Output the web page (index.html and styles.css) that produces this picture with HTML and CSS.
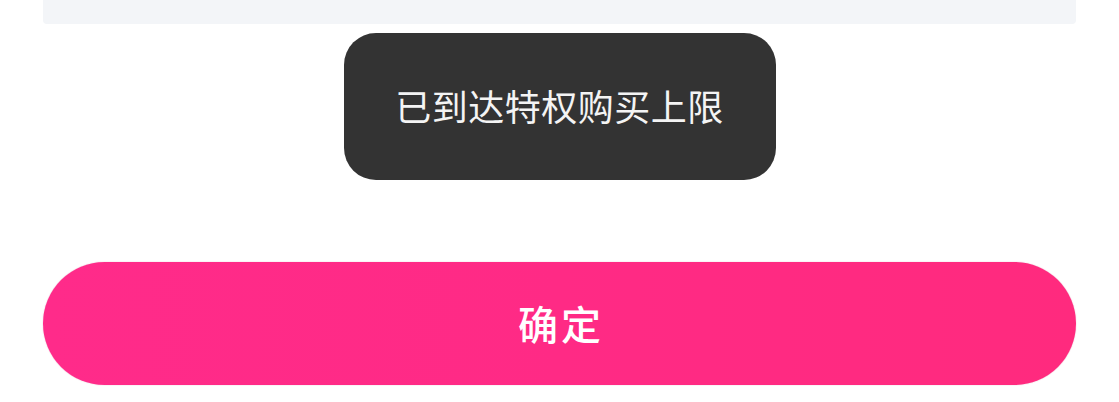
FILE: index.html
```html
<!DOCTYPE html>
<html lang="zh-CN">
<head>
<meta charset="utf-8">
<link rel="stylesheet" href="styles.css">
</head>
<body>
<div class="page">
  <div class="top-panel"></div>
  <div class="toast-row">
    <div class="toast">已到达特权购买上限</div>
  </div>
  <button class="confirm">确定</button>
</div>
</body>
</html>
```
FILE: styles.css
```css
html, body {
  margin: 0;
  padding: 0;
  background: #ffffff;
}
body {
  font-family: "Noto Sans CJK SC", "Noto Sans", sans-serif;
  width: 1119px;
  height: 402px;
  overflow: hidden;
}
.page {
  padding: 0 43px;
  display: flex;
  flex-direction: column;
}
.top-panel {
  height: 24px;
  background: #f3f5f8;
  border-radius: 0 0 4px 4px;
}
.toast-row {
  display: flex;
  justify-content: center;
  margin-top: 9px;
}
.toast {
  width: 432px;
  height: 147px;
  box-sizing: border-box;
  background: #333333;
  border-radius: 32px;
  color: #f4f4f4;
  font-size: 36px;
  line-height: 1;
  display: flex;
  align-items: center;
  justify-content: center;
  padding-bottom: 4px;
  letter-spacing: 0.5px;
}
.confirm {
  margin-top: 82px;
  height: 123px;
  border: none;
  border-radius: 62px;
  background: linear-gradient(90deg, #ff2b8a 0%, #ff2a85 50%, #ff2a7e 100%);
  color: #ffffff;
  font-family: "Noto Sans CJK SC", "Noto Sans", sans-serif;
  font-size: 40px;
  font-weight: 500;
  letter-spacing: 3px;
  padding: 0 0 2px 3px;
  box-shadow: 0 0 1px rgba(180, 30, 90, 0.5);
}
```
